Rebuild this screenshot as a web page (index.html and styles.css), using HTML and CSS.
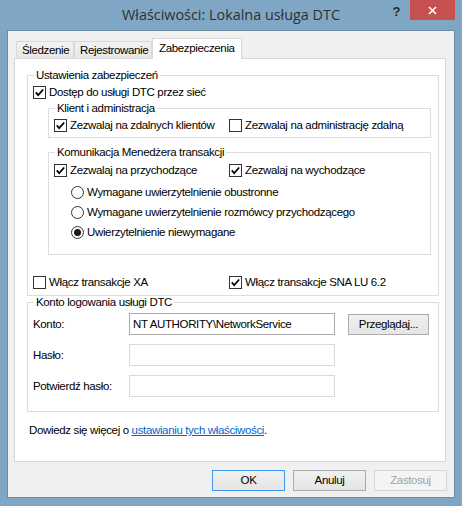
FILE: index.html
```html
<!DOCTYPE html>
<html lang="pl">
<head>
<meta charset="utf-8">
<title>Właściwości: Lokalna usługa DTC</title>
<link rel="stylesheet" href="styles.css">
</head>
<body>
<div class="window">
  <div class="titlebar">
    <div class="title">Właściwości: Lokalna usługa DTC</div>
    <div class="controls">
      <div class="help">?</div>
      <div class="close"><svg width="9" height="9" viewBox="0 0 9 9"><path d="M1 1L8 8M8 1L1 8" stroke="#fff" stroke-width="1.6" fill="none"/></svg></div>
    </div>
  </div>
  <div class="client">
    <div class="tabs">
      <div class="tab t1">Śledzenie</div>
      <div class="tab t2">Rejestrowanie</div>
      <div class="tab t3 active">Zabezpieczenia</div>
    </div>
    <div class="panel">
      <fieldset class="group">
        <legend>Ustawienia zabezpieczeń</legend>
        <div class="gbody outer-body">
          <div class="row"><span class="box"><svg width="11" height="11" viewBox="0 0 11 11"><path d="M1.8 5.4L4.2 8.1L9.2 2.5" stroke="#000" stroke-width="1.8" fill="none"/></svg></span>Dostęp do usługi DTC przez sieć</div>

          <fieldset class="group sub">
            <legend>Klient i administracja</legend>
            <div class="gbody sub-body">
              <div class="cols">
                <div class="row"><span class="box"><svg width="11" height="11" viewBox="0 0 11 11"><path d="M1.8 5.4L4.2 8.1L9.2 2.5" stroke="#000" stroke-width="1.8" fill="none"/></svg></span>Zezwalaj na zdalnych klientów</div>
                <div class="row"><span class="box"></span>Zezwalaj na administrację zdalną</div>
              </div>
            </div>
          </fieldset>

          <fieldset class="group sub komm">
            <legend>Komunikacja Menedżera transakcji</legend>
            <div class="gbody komm-body">
              <div class="cols">
                <div class="row"><span class="box"><svg width="11" height="11" viewBox="0 0 11 11"><path d="M1.8 5.4L4.2 8.1L9.2 2.5" stroke="#000" stroke-width="1.8" fill="none"/></svg></span>Zezwalaj na przychodzące</div>
                <div class="row"><span class="box"><svg width="11" height="11" viewBox="0 0 11 11"><path d="M1.8 5.4L4.2 8.1L9.2 2.5" stroke="#000" stroke-width="1.8" fill="none"/></svg></span>Zezwalaj na wychodzące</div>
              </div>
              <div class="radios">
                <div class="row"><span class="radio"></span>Wymagane uwierzytelnienie obustronne</div>
                <div class="row"><span class="radio"></span>Wymagane uwierzytelnienie rozmówcy przychodzącego</div>
                <div class="row"><span class="radio on"></span>Uwierzytelnienie niewymagane</div>
              </div>
            </div>
          </fieldset>

          <div class="cols wide xa">
            <div class="row"><span class="box"></span>Włącz transakcje XA</div>
            <div class="row"><span class="box"><svg width="11" height="11" viewBox="0 0 11 11"><path d="M1.8 5.4L4.2 8.1L9.2 2.5" stroke="#000" stroke-width="1.8" fill="none"/></svg></span>Włącz transakcje SNA LU 6.2</div>
          </div>
        </div>
      </fieldset>

      <fieldset class="group konto">
        <legend>Konto logowania usługi DTC</legend>
        <div class="gbody konto-body">
          <div class="form">
            <div class="lbl">Konto:</div>
            <div class="input">NT AUTHORITY\NetworkService</div>
            <div class="btn browse">Przeglądaj...</div>
            <div class="lbl">Hasło:</div>
            <div class="input off"></div>
            <div></div>
            <div class="lbl">Potwierdź hasło:</div>
            <div class="input off"></div>
            <div></div>
          </div>
        </div>
      </fieldset>

      <p class="learn">Dowiedz się więcej o <a href="#" class="link">ustawianiu tych właściwości</a>.</p>
    </div>
    <div class="buttons">
      <div class="btn default">OK</div>
      <div class="btn">Anuluj</div>
      <div class="btn disabled">Zastosuj</div>
    </div>
  </div>
</div>
</body>
</html>
```
FILE: styles.css
```css
* { box-sizing: border-box; }
html, body { margin: 0; padding: 0; }
body {
  width: 462px;
  height: 506px;
  overflow: hidden;
  font-family: "Liberation Sans", Arial, sans-serif;
  font-size: 11.5px;
  line-height: 13px;
  letter-spacing: -0.35px;
  color: #000;
}
.window {
  width: 462px;
  height: 506px;
  background: #7fa7c5;
  display: flex;
  flex-direction: column;
}
.titlebar {
  height: 30px;
  flex: none;
  display: grid;
  grid-template-columns: 1fr auto 1fr;
  align-items: start;
}
.title {
  grid-column: 2;
  font-family: "Open Sans", "Liberation Sans", sans-serif;
  font-size: 14.4px;
  line-height: 30px;
  letter-spacing: 0;
  color: #2f2f2f;
  white-space: nowrap;
}
.controls {
  grid-column: 3;
  justify-self: end;
  display: flex;
  margin-right: 7px;
}
.help {
  width: 27px;
  height: 20px;
  font-family: "Liberation Sans", Arial, sans-serif;
  font-weight: bold;
  font-size: 13px;
  line-height: 24px;
  letter-spacing: 0;
  text-align: center;
  color: #2a2a2a;
}
.close {
  width: 45px;
  height: 20px;
  background: #c75050;
  display: flex;
  align-items: center;
  justify-content: center;
}
.client {
  flex: 1;
  margin: 0 7px 8px;
  border: 1px solid #6b8aa3;
  background: #f0f0f0;
  display: flex;
  flex-direction: column;
}
.tabs {
  display: flex;
  align-items: flex-end;
  height: 21px;
  margin: 7px 0 -1px 8px;
}
.tab {
  height: 18px;
  border: 1px solid #d9d9d9;
  border-bottom: none;
  background: linear-gradient(#f2f2f2, #e6e6e6);
  padding-left: 5px;
  line-height: 16px;
  white-space: nowrap;
}
.t1 { width: 58px; }
.t2 { width: 78px; }
.t3 { width: 90px; }
.tab.active {
  height: 21px;
  background: #fff;
  padding-left: 6px;
  line-height: 18px;
  position: relative;
  z-index: 1;
}
.panel {
  margin-left: 6px;
  width: 432px;
  height: 404px;
  border: 1px solid #d9d9d9;
  background: #fff;
  padding: 10px 6px 0 12px;
}
fieldset.group {
  border: 1px solid #dcdcdc;
  margin: 0;
  padding: 0;
  min-width: 0;
}
legend {
  padding: 0 2px;
  margin-left: 6px;
  line-height: 13px;
}
.gbody { padding-left: 5px; padding-right: 5px; }
.outer-body { padding-top: 4px; padding-bottom: 6px; }
.sub { margin: 3px 2px 0 15px !important; }
.sub-body { padding-top: 4px; padding-bottom: 5px; }
.komm { margin-top: 8px !important; }
.komm-body { padding-top: 5px; padding-bottom: 15px; }
.row {
  display: flex;
  align-items: center;
  height: 13px;
  white-space: nowrap;
}
.cols {
  display: grid;
  grid-template-columns: 175px auto;
}
.cols.wide { grid-template-columns: 196px auto; }
.xa { margin-top: 21px; }
.box {
  width: 13px;
  height: 13px;
  flex: none;
  border: 1px solid #333;
  background: #fff;
  margin-right: 3px;
  display: flex;
}
.radios {
  margin: 9px 0 0 17px;
  display: flex;
  flex-direction: column;
  gap: 7px;
}
.radio {
  width: 13px;
  height: 13px;
  flex: none;
  border: 1px solid #333;
  border-radius: 50%;
  background: #fff;
  margin-right: 3px;
  display: flex;
  align-items: center;
  justify-content: center;
}
.radio.on::after {
  content: "";
  width: 7px;
  height: 7px;
  border-radius: 50%;
  background: #1a1a1a;
}
.konto { margin-top: 4px; }
.konto-body { padding-top: 4px; padding-bottom: 14px; }
.form {
  display: grid;
  grid-template-columns: 96px 206px auto;
  row-gap: 9px;
  align-items: center;
}
.lbl { white-space: nowrap; }
.input {
  height: 22px;
  border: 1px solid #a9a9a9;
  background: #fff;
  padding-left: 3px;
  line-height: 20px;
  white-space: nowrap;
}
.input.off { border-color: #dadada; }
.btn {
  width: 73px;
  height: 21px;
  border: 1px solid #acacac;
  background: linear-gradient(#f0f0f0, #e5e5e5);
  display: flex;
  align-items: center;
  justify-content: center;
  white-space: nowrap;
}
.btn.browse {
  width: 81px;
  margin-left: 13px;
}
.learn {
  margin: 12px 0 0 2px;
}
.link {
  color: #0066cc;
  text-decoration: underline;
}
.buttons {
  display: flex;
  justify-content: flex-end;
  gap: 8px;
  margin-top: 8px;
  padding-right: 7px;
}
.btn.default { border-color: #3c9bf0; }
.btn.disabled {
  color: #a3a3a3;
  border-color: #d5d5d5;
  background: #f4f4f4;
}
```
